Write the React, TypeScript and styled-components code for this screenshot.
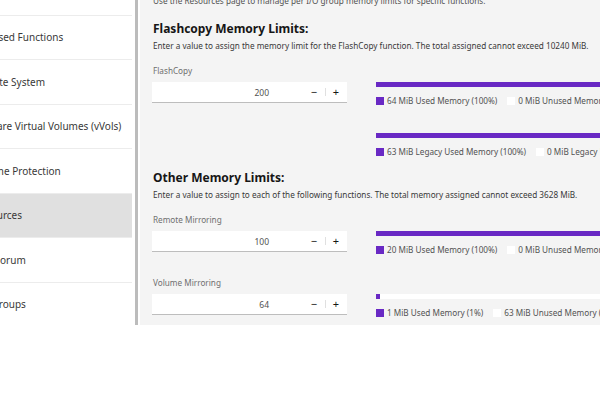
import * as React from "react"
import styled, { createGlobalStyle } from "styled-components"

const GlobalStyle = createGlobalStyle`
  html, body {
    margin: 0;
    padding: 0;
    background: #ffffff;
  }
  body {
    font-family: "Noto Sans", "Open Sans", sans-serif;
    color: #161616;
  }
`

const Frame = styled.div`
  display: flex;
  width: 600px;
  height: 325px;
  overflow: hidden;
  background: #ffffff;
`

const Sidebar = styled.nav`
  flex: none;
  width: 175px;
  margin-left: -43px;
  margin-top: -29px;
  background: #ffffff;
`

const NavItem = styled.div<{ $active?: boolean }>`
  box-sizing: border-box;
  display: flex;
  align-items: center;
  height: 44.5px;
  padding-left: 17px;
  border-bottom: 1px solid #ececec;
  background: ${(p) => (p.$active ? "#e0e0e0" : "#ffffff")};
  color: #393939;
  font-size: 10px;
  white-space: nowrap;
`

const Rail = styled.div`
  flex: none;
  width: 3px;
  margin-left: 3px;
  margin-right: 2px;
  background: #bcbcbc;
`

const Content = styled.main`
  flex: 1;
  min-width: 0;
  overflow: hidden;
  background: #f4f4f4;
  padding-left: 13px;
`

const Inner = styled.div`
  margin-top: -5px;
  width: 600px;
`

const Intro = styled.p`
  margin: 0;
  font-size: 8.2px;
  line-height: 12px;
  color: #525252;
`

const Section = styled.section`
  margin-top: 14px;

  & + & {
    margin-top: 13px;
  }
`

const Heading = styled.h2`
  margin: 0;
  font-size: 12px;
  line-height: 16px;
  font-weight: 700;
  color: #161616;
`

const Desc = styled.p`
  margin: 3px 0 0;
  font-size: 8.2px;
  line-height: 12px;
  color: #393939;
`

const FieldList = styled.div`
  display: flex;
  flex-direction: column;
  gap: 22px;
  margin-top: 13px;
`

const Label = styled.div`
  font-size: 8.2px;
  line-height: 12px;
  color: #6f6f6f;
  margin-bottom: 5px;
`

const Row = styled.div`
  display: grid;
  grid-template-columns: 195px 1fr;
  column-gap: 29px;
  margin-left: -1px;
`

const NumberInput = styled.div`
  box-sizing: border-box;
  display: flex;
  align-items: center;
  height: 21px;
  background: #ffffff;
  border-bottom: 1px solid #bdbdbd;
`

const Value = styled.span`
  flex: 1;
  text-align: right;
  padding-right: 34px;
  font-size: 8.5px;
  color: #525252;
`

const Step = styled.button`
  position: relative;
  width: 22px;
  height: 20px;
  padding: 0;
  border: 0;
  background: transparent;
  color: #161616;
  font-family: inherit;
  font-size: 11px;
  line-height: 20px;
  cursor: pointer;

  & + &::before {
    content: "";
    position: absolute;
    left: 0;
    top: 6px;
    height: 8px;
    width: 1px;
    background: #e0e0e0;
  }
`

const Meters = styled.div`
  display: flex;
  flex-direction: column;
  gap: 27px;
`

const Meter = styled.div``

const Track = styled.div`
  height: 5px;
  background: #ffffff;
`

const Fill = styled.div`
  height: 100%;
  background: #6929c4;
`

const Legend = styled.div`
  display: flex;
  align-items: center;
  gap: 10px;
  margin-top: 9px;
  font-size: 8.2px;
  line-height: 10px;
  color: #525252;
  white-space: nowrap;
`

const Key = styled.span<{ $filled?: boolean }>`
  display: inline-flex;
  align-items: center;
  gap: 3px;

  &::before {
    content: "";
    width: 8px;
    height: 8px;
    background: ${(p) => (p.$filled ? "#6929c4" : "#ffffff")};
  }
`

type MeterData = { used: string; unused: string; pct: number }

type FieldData = { label: string; value: number; meters: MeterData[] }

const flashcopy: FieldData[] = [
  {
    label: "FlashCopy",
    value: 200,
    meters: [
      { used: "64 MiB Used Memory (100%)", unused: "0 MiB Unused Memory", pct: 100 },
      { used: "63 MiB Legacy Used Memory (100%)", unused: "0 MiB Legacy Unused Memory", pct: 100 },
    ],
  },
]

const other: FieldData[] = [
  {
    label: "Remote Mirroring",
    value: 100,
    meters: [{ used: "20 MiB Used Memory (100%)", unused: "0 MiB Unused Memory", pct: 100 }],
  },
  {
    label: "Volume Mirroring",
    value: 64,
    meters: [{ used: "1 MiB Used Memory (1%)", unused: "63 MiB Unused Memory (99%)", pct: 1 }],
  },
]

const navItems = [
  "Date and Time",
  "Licensed Functions",
  "Update System",
  "VMware Virtual Volumes (vVols)",
  "Volume Protection",
  "Resources",
  "IP Quorum",
  "I/O Groups",
]

const Field: React.FC<{ field: FieldData }> = ({ field }) => (
  <div>
    <Label>{field.label}</Label>
    <Row>
      <NumberInput>
        <Value>{field.value}</Value>
        <Step aria-label="Decrement">−</Step>
        <Step aria-label="Increment">+</Step>
      </NumberInput>
      <Meters>
        {field.meters.map((m) => (
          <Meter key={m.used}>
            <Track>
              <Fill style={{ width: `${m.pct}%` }} />
            </Track>
            <Legend>
              <Key $filled>{m.used}</Key>
              <Key>{m.unused}</Key>
            </Legend>
          </Meter>
        ))}
      </Meters>
    </Row>
  </div>
)

export default function App() {
  return (
    <>
      <GlobalStyle />
      <Frame>
        <Sidebar>
          {navItems.map((item) => (
            <NavItem key={item} $active={item === "Resources"}>
              {item}
            </NavItem>
          ))}
        </Sidebar>
        <Rail />
        <Content>
          <Inner>
            <Intro>Use the Resources page to manage per I/O group memory limits for specific functions.</Intro>
            <Section>
              <Heading>Flashcopy Memory Limits:</Heading>
              <Desc>
                Enter a value to assign the memory limit for the FlashCopy function. The total assigned cannot exceed
                10240 MiB.
              </Desc>
              <FieldList>
                {flashcopy.map((f) => (
                  <Field key={f.label} field={f} />
                ))}
              </FieldList>
            </Section>
            <Section>
              <Heading>Other Memory Limits:</Heading>
              <Desc>
                Enter a value to assign to each of the following functions. The total memory assigned cannot exceed
                3628 MiB.
              </Desc>
              <FieldList>
                {other.map((f) => (
                  <Field key={f.label} field={f} />
                ))}
              </FieldList>
            </Section>
          </Inner>
        </Content>
      </Frame>
    </>
  )
}
